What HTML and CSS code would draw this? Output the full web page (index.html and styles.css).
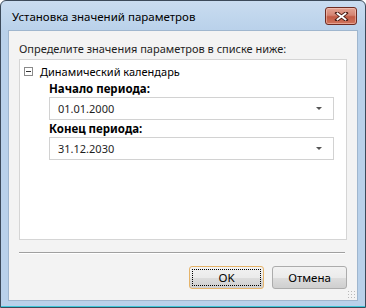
FILE: index.html
```html
<!DOCTYPE html>
<html lang="ru">
<head>
    <meta charset="UTF-8">
    <title>Установка значений параметров</title>
    <link rel="stylesheet" href="styles.css">
</head>
<body>
    <div class="window">
        <div class="title-bar">
            <span class="title">Установка значений параметров</span>
            <button class="close-btn" aria-label="Закрыть">
                <svg width="15" height="9" viewBox="0 0 15 9">
                    <path d="M3 1 L12 8 M12 1 L3 8" stroke="#4a1c14" stroke-width="3.6" stroke-linecap="square"/>
                    <path d="M3.5 1.5 L11.5 7.5 M11.5 1.5 L3.5 7.5" stroke="#ffffff" stroke-width="1.8" stroke-linecap="square"/>
                </svg>
            </button>
        </div>

        <div class="client">
            <div class="hint">Определите значения параметров в списке ниже:</div>

            <div class="tree">
                <div class="tree-node">
                    <span class="toggle"></span>
                    <span class="node-title">Динамический календарь</span>
                </div>
                <div class="params">
                    <label class="param-label">Начало периода:</label>
                    <div class="combo">
                        <span class="combo-value">01.01.2000</span>
                        <span class="combo-arrow"></span>
                    </div>
                    <label class="param-label">Конец периода:</label>
                    <div class="combo">
                        <span class="combo-value">31.12.2030</span>
                        <span class="combo-arrow"></span>
                    </div>
                </div>
            </div>

            <div class="separator"></div>

            <div class="buttons">
                <button class="btn btn-default">OK</button>
                <button class="btn">Отмена</button>
            </div>
            <div class="grip"></div>
        </div>
    </div>
</body>
</html>
```

FILE: styles.css
```css
body {
    margin: 0;
    padding: 0;
    font-family: "Noto Sans", sans-serif;
    font-size: 11px;
    color: #1e1e1e;
    background: #ffffff;
}
.window {
    width: 366px;
    height: 308px;
    box-sizing: border-box;
    border: 1px solid #3c4a5a;
    border-radius: 6px 6px 0 0;
    background: linear-gradient(180deg, #c9dcf0 0px, #b9d1ea 30px, #b9d1ea 100%);
    display: flex;
    flex-direction: column;
    padding: 0 7px 6px 7px;
    box-shadow: inset 0 -1px 0 #3fc6d8;
}
.title-bar {
    height: 29px;
    display: flex;
    align-items: center;
    justify-content: space-between;
}
.title {
    padding-left: 4px;
    padding-top: 1px;
    font-size: 11.5px;
    color: #000000;
}
.close-btn {
    width: 32px;
    height: 18px;
    margin-right: 1px;
    margin-top: 1px;
    padding: 0;
    border: 1px solid #6d2b22;
    border-radius: 3px;
    background: linear-gradient(180deg, #e3a393 0%, #d48472 45%, #c25a44 55%, #d0745c 100%);
    display: flex;
    align-items: center;
    justify-content: center;
    box-shadow: inset 0 0 0 1px rgba(255, 220, 210, 0.45);
}
.client {
    flex: 1;
    background: #f3f3f3;
    border: 1px solid #9fb6ce;
    position: relative;
    display: flex;
    flex-direction: column;
    padding: 9px 10px 0 10px;
}
.hint {
    line-height: 17px;
    margin-bottom: 2px;
}
.tree {
    height: 181px;
    box-sizing: border-box;
    background: #ffffff;
    border: 1px solid #d5d5d5;
    padding: 3px 12px 0 3px;
}
.tree-node {
    display: flex;
    align-items: center;
    height: 17px;
}
.toggle {
    width: 9px;
    height: 9px;
    box-sizing: border-box;
    border: 1px solid #8a8a8a;
    position: relative;
    margin-right: 7px;
    margin-left: 1px;
}
.toggle::after {
    content: "";
    position: absolute;
    left: 1px;
    top: 3px;
    width: 5px;
    height: 1px;
    background: #333333;
}
.node-title {
    color: #000000;
}
.params {
    padding-left: 26px;
}
.param-label {
    display: block;
    font-weight: bold;
    font-size: 11.5px;
    color: #000000;
    line-height: 17px;
}
.combo {
    height: 23px;
    box-sizing: border-box;
    border: 1px solid #d2d2d2;
    background: #ffffff;
    display: flex;
    align-items: center;
    justify-content: space-between;
    padding: 0 11px 0 8px;
}
.combo-arrow {
    width: 0;
    height: 0;
    border-left: 3px solid transparent;
    border-right: 3px solid transparent;
    border-top: 3px solid #555555;
}
.separator {
    height: 1px;
    background: #a0a0a0;
    border-bottom: 1px solid #ffffff;
    margin: 12px 2px 0 0;
}
.buttons {
    display: flex;
    justify-content: flex-end;
    gap: 8px;
    margin-top: 12px;
}
.btn {
    width: 75px;
    height: 23px;
    font-family: "Noto Sans", sans-serif;
    font-size: 11.5px;
    color: #000000;
    border: 1px solid #acacac;
    border-radius: 3px;
    background: linear-gradient(180deg, #f2f2f2 0%, #ebebeb 50%, #dddddd 51%, #cfcfcf 100%);
    padding: 0;
}
.btn-default {
    border-color: #e6b46a;
    outline: 1px dotted #000000;
    outline-offset: -4px;
}
.grip {
    position: absolute;
    right: 2px;
    bottom: 2px;
    width: 8px;
    height: 8px;
    background-image: radial-gradient(circle, #b8b8b8 0.8px, transparent 1px);
    background-size: 3px 3px;
}
```
